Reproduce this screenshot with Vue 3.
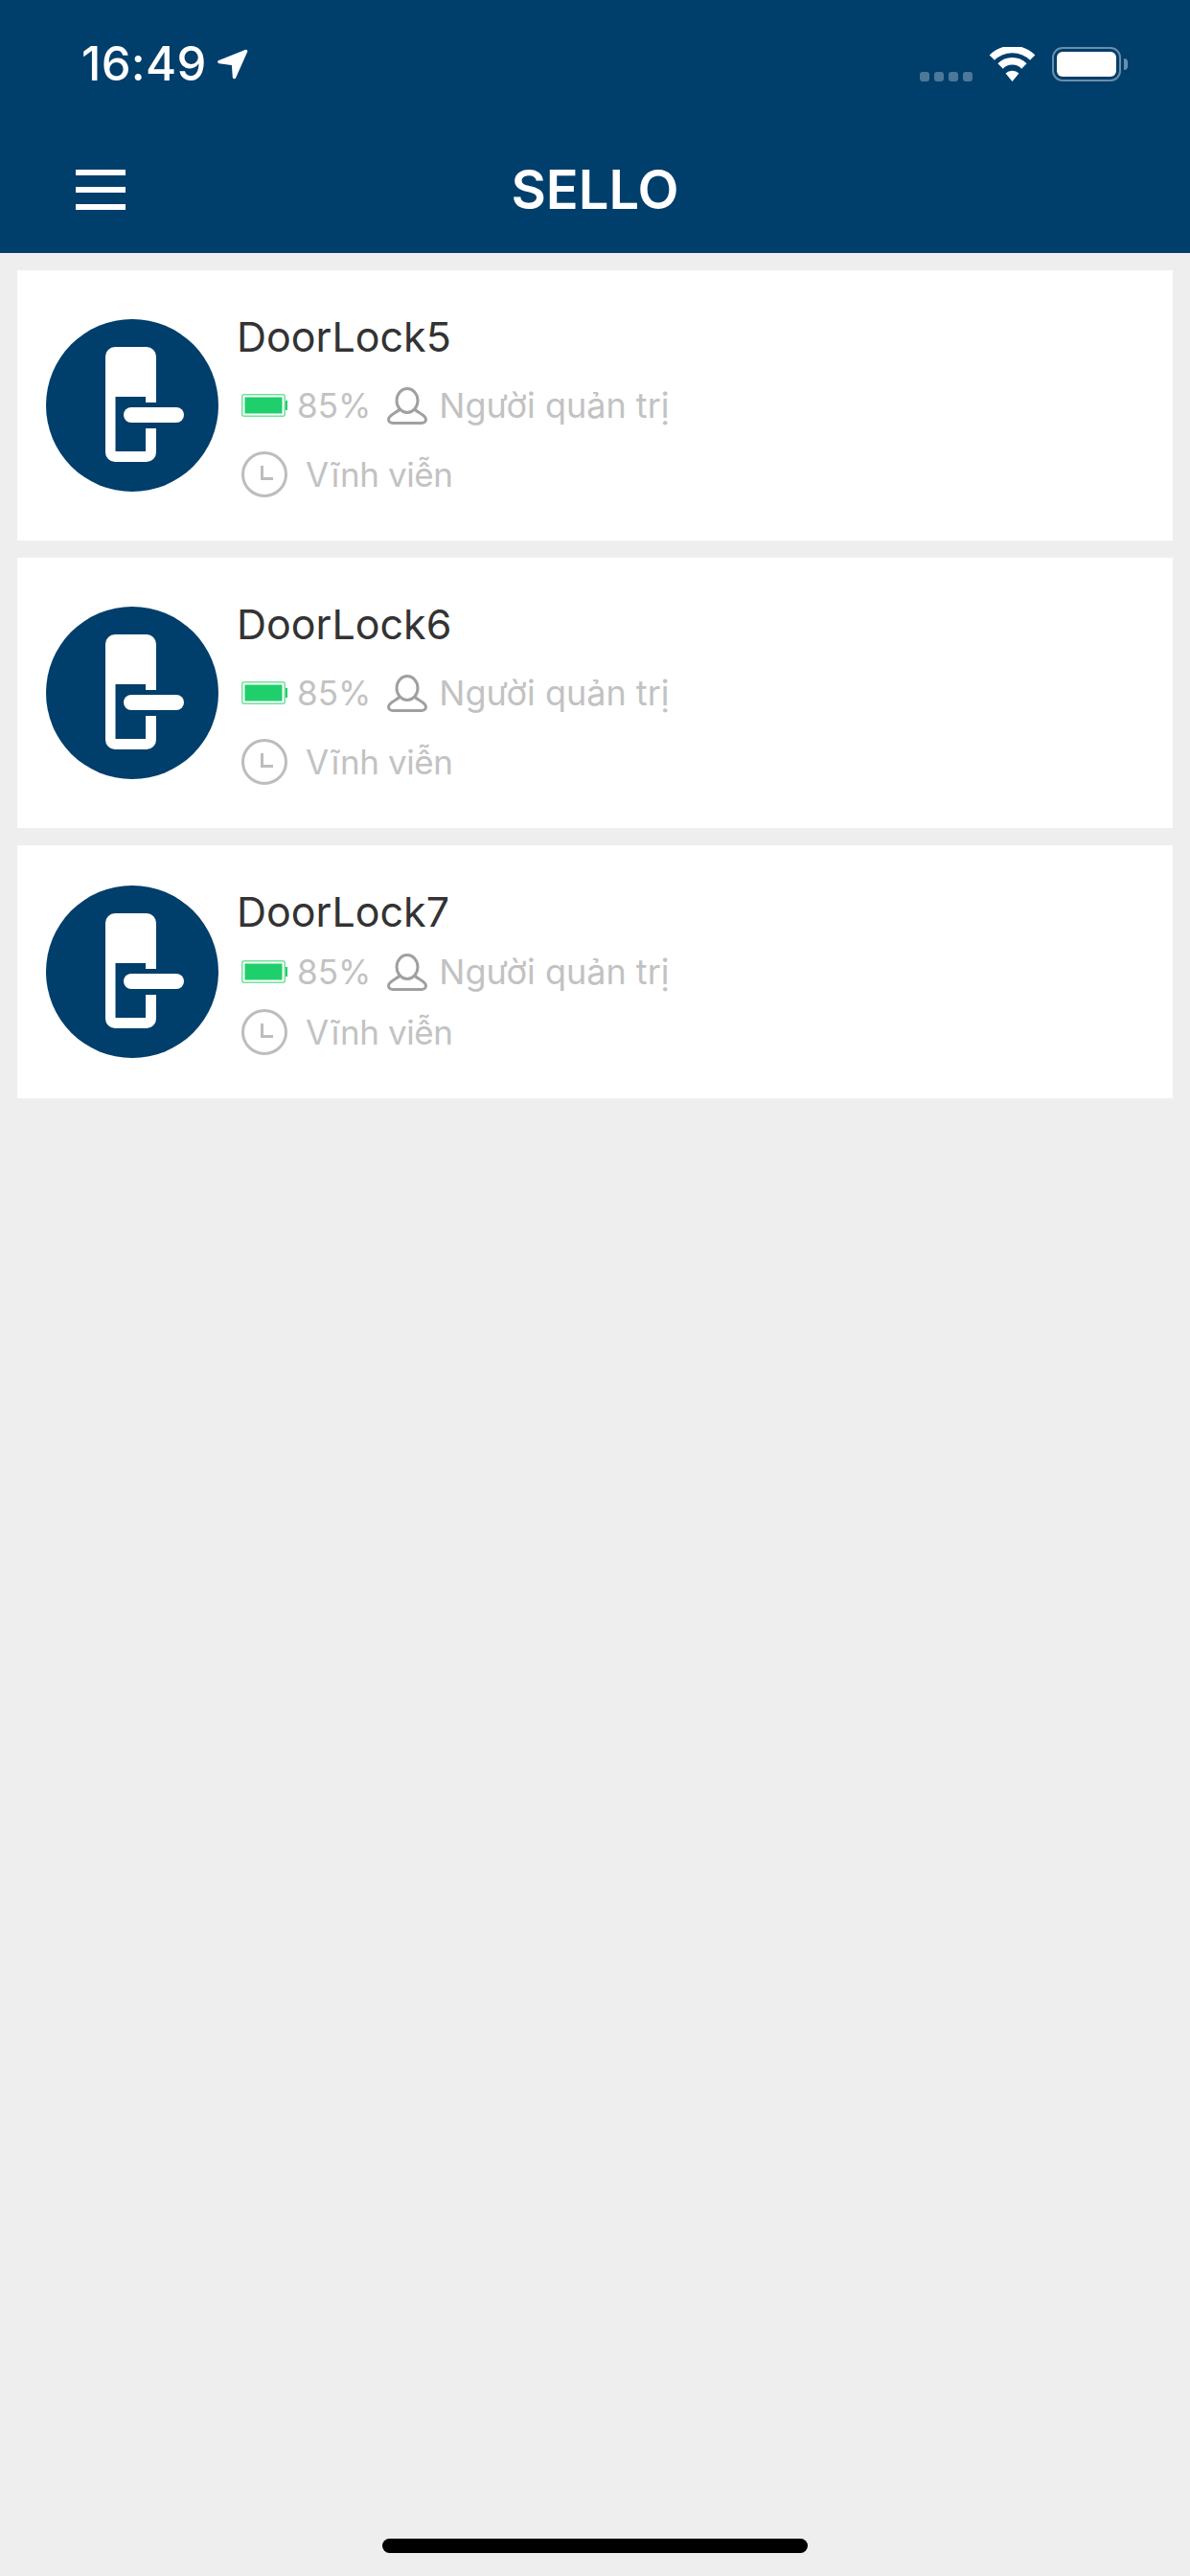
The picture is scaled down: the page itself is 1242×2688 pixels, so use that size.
<script setup>
const locks = [
  { name: 'DoorLock5', compact: false },
  { name: 'DoorLock6', compact: false },
  { name: 'DoorLock7', compact: true },
]
</script>

<template>
  <div class="screen">
    <header class="header">
      <div class="status">
        <div class="status-left">
          <span class="time">16:49</span>
          <svg class="arrow" width="32" height="32" viewBox="0 0 32 32">
            <path d="M29.500 2.500 2 13.500 16.500 15.500 17.500 29.500Z" fill="#fff" stroke="#fff" stroke-width="3.500" stroke-linejoin="round" />
          </svg>
        </div>
        <div class="status-right">
          <div class="dots"><i></i><i></i><i></i><i></i></div>
          <svg class="wifi" width="49" height="36" viewBox="0 0 49 36">
            <path d="M3.300 11.200a30 30 0 0 1 42.400 0" fill="none" stroke="#fff" stroke-width="7.500" />
            <path d="M12.100 20a17.500 17.500 0 0 1 24.800 0" fill="none" stroke="#fff" stroke-width="7.500" />
            <path d="M17.500 27.500a10 10 0 0 1 14 0L24.500 36Z" fill="#fff" />
          </svg>
          <div class="phone-battery">
            <div class="phone-battery-shell"><div class="phone-battery-fill"></div></div>
            <div class="phone-battery-nub"></div>
          </div>
        </div>
      </div>
      <nav class="nav">
        <div class="menu"><i></i><i></i><i></i></div>
        <div class="title">SELLO</div>
        <div></div>
      </nav>
    </header>

    <main class="list">
      <article v-for="lock in locks" :key="lock.name" class="card" :class="{ compact: lock.compact }">
        <svg class="avatar" width="180" height="180" viewBox="0 0 180 180">
          <circle cx="90" cy="90" r="90" fill="#003e6b" />
          <path d="M72 29h33a10 10 0 0 1 10 10V87H104V81H72.500V138H104V114H115V139a10 10 0 0 1-10 10H72a10 10 0 0 1-10-10V39a10 10 0 0 1 10-10Z" fill="#fff" />
          <rect x="81" y="92" width="63" height="16" rx="8" fill="#fff" />
        </svg>
        <div class="info">
          <div class="name">{{ lock.name }}</div>
          <div class="row meta">
            <svg class="battery" width="48" height="24" viewBox="0 0 48 24">
              <rect x="0.750" y="0.750" width="44.500" height="22.500" rx="2" fill="#fff" stroke="#6fe39a" stroke-width="1.500" />
              <rect x="3.500" y="3.500" width="39" height="17" fill="#1fcf6b" />
              <rect x="46" y="7" width="2" height="10" fill="#1fcf6b" />
            </svg>
            <span class="percent">85%</span>
            <svg class="person" width="42" height="39" viewBox="0 0 42 39">
              <ellipse cx="21" cy="14" rx="11" ry="12.500" fill="none" stroke="#a0a0a0" stroke-width="3" />
              <path d="M13 23.500C9 27 1.500 29.500 1.500 33.500c0 2.500 2 4 4.500 4h30c2.500 0 4.500-1.500 4.500-4 0-4-7.500-6.500-11.500-10" fill="none" stroke="#a0a0a0" stroke-width="3" />
            </svg>
            <span class="role">Người quản trị</span>
          </div>
          <div class="row period">
            <svg class="clock" width="48" height="48" viewBox="0 0 48 48">
              <circle cx="24" cy="24" r="22.500" fill="none" stroke="#bdbdbd" stroke-width="3" />
              <path d="M21.500 15V28.500H33" fill="none" stroke="#bdbdbd" stroke-width="3" />
            </svg>
            <span class="duration">Vĩnh viễn</span>
          </div>
        </div>
      </article>
    </main>

    <div class="home-area"><div class="home-indicator"></div></div>
  </div>
</template>

<style scoped>
.screen {
  width: 1242px;
  height: 2688px;
  background: #eeeeee;
  display: flex;
  flex-direction: column;
  font-family: Inter, "Liberation Sans", sans-serif;
  overflow: hidden;
}
.header {
  height: 264px;
  background: #003e6b;
  color: #fff;
  flex: none;
}
.status {
  height: 132px;
  box-sizing: border-box;
  padding: 49px 65px 0 85px;
  display: flex;
  justify-content: space-between;
  align-items: flex-start;
}
.status-left {
  display: flex;
  align-items: center;
  gap: 11px;
}
.time {
  font-size: 49px;
  font-weight: 500;
  line-height: 36px;
  letter-spacing: 0.3px;
}
.arrow {
  display: block;
}
.status-right {
  display: flex;
  align-items: flex-end;
  height: 36px;
}
.dots {
  display: flex;
  gap: 5px;
  margin-right: 17px;
}
.dots i {
  display: block;
  width: 10px;
  height: 10px;
  border-radius: 3px;
  background: rgba(255, 255, 255, 0.3);
}
.wifi {
  display: block;
  margin-right: 17px;
}
.phone-battery {
  display: flex;
  align-items: center;
  gap: 3px;
  height: 36px;
}
.phone-battery-shell {
  box-sizing: border-box;
  width: 72px;
  height: 36px;
  padding: 3px;
  border: 2.500px solid rgba(255, 255, 255, 0.42);
  border-radius: 11px;
}
.phone-battery-fill {
  height: 100%;
  border-radius: 6px;
  background: #fff;
}
.phone-battery-nub {
  width: 4px;
  height: 12px;
  border-radius: 0 4px 4px 0;
  background: rgba(255, 255, 255, 0.42);
}
.nav {
  height: 132px;
  box-sizing: border-box;
  padding: 0 79px;
  display: grid;
  grid-template-columns: 1fr auto 1fr;
  align-items: center;
}
.menu {
  width: 52px;
  display: flex;
  flex-direction: column;
  gap: 12px;
}
.menu i {
  display: block;
  height: 6px;
  background: #fff;
}
.title {
  font-size: 56px;
  font-weight: 600;
  line-height: 66px;
}
.list {
  display: flex;
  flex-direction: column;
  gap: 18px;
  padding: 18px 18px 0;
  flex: none;
}
.card {
  height: 282px;
  box-sizing: border-box;
  background: #fff;
  display: flex;
  align-items: center;
  padding-left: 30px;
}
.card.compact {
  height: 264px;
}
.avatar {
  display: block;
  flex: none;
}
.info {
  align-self: flex-start;
  margin-left: 19px;
  padding-top: 44px;
}
.name {
  font-size: 43px;
  line-height: 50px;
  color: #333333;
}
.row {
  display: flex;
  align-items: center;
  color: #c2c2c2;
  font-size: 35px;
}
.meta {
  height: 44px;
  margin-top: 25px;
  padding-left: 5px;
}
.compact .meta {
  margin-top: 16px;
}
.battery {
  display: block;
}
.percent {
  margin-left: 10px;
}
.person {
  display: block;
  margin-left: 17px;
}
.role {
  margin-left: 12px;
  font-size: 36px;
}
.period {
  height: 48px;
  margin-top: 26px;
  padding-left: 5px;
}
.compact .period {
  margin-top: 17px;
}
.clock {
  display: block;
}
.duration {
  margin-left: 19px;
  letter-spacing: -0.4px;
}
.home-area {
  margin-top: auto;
  padding-bottom: 24px;
  display: flex;
  justify-content: center;
}
.home-indicator {
  width: 444px;
  height: 15px;
  border-radius: 8px;
  background: #000;
}
</style>
